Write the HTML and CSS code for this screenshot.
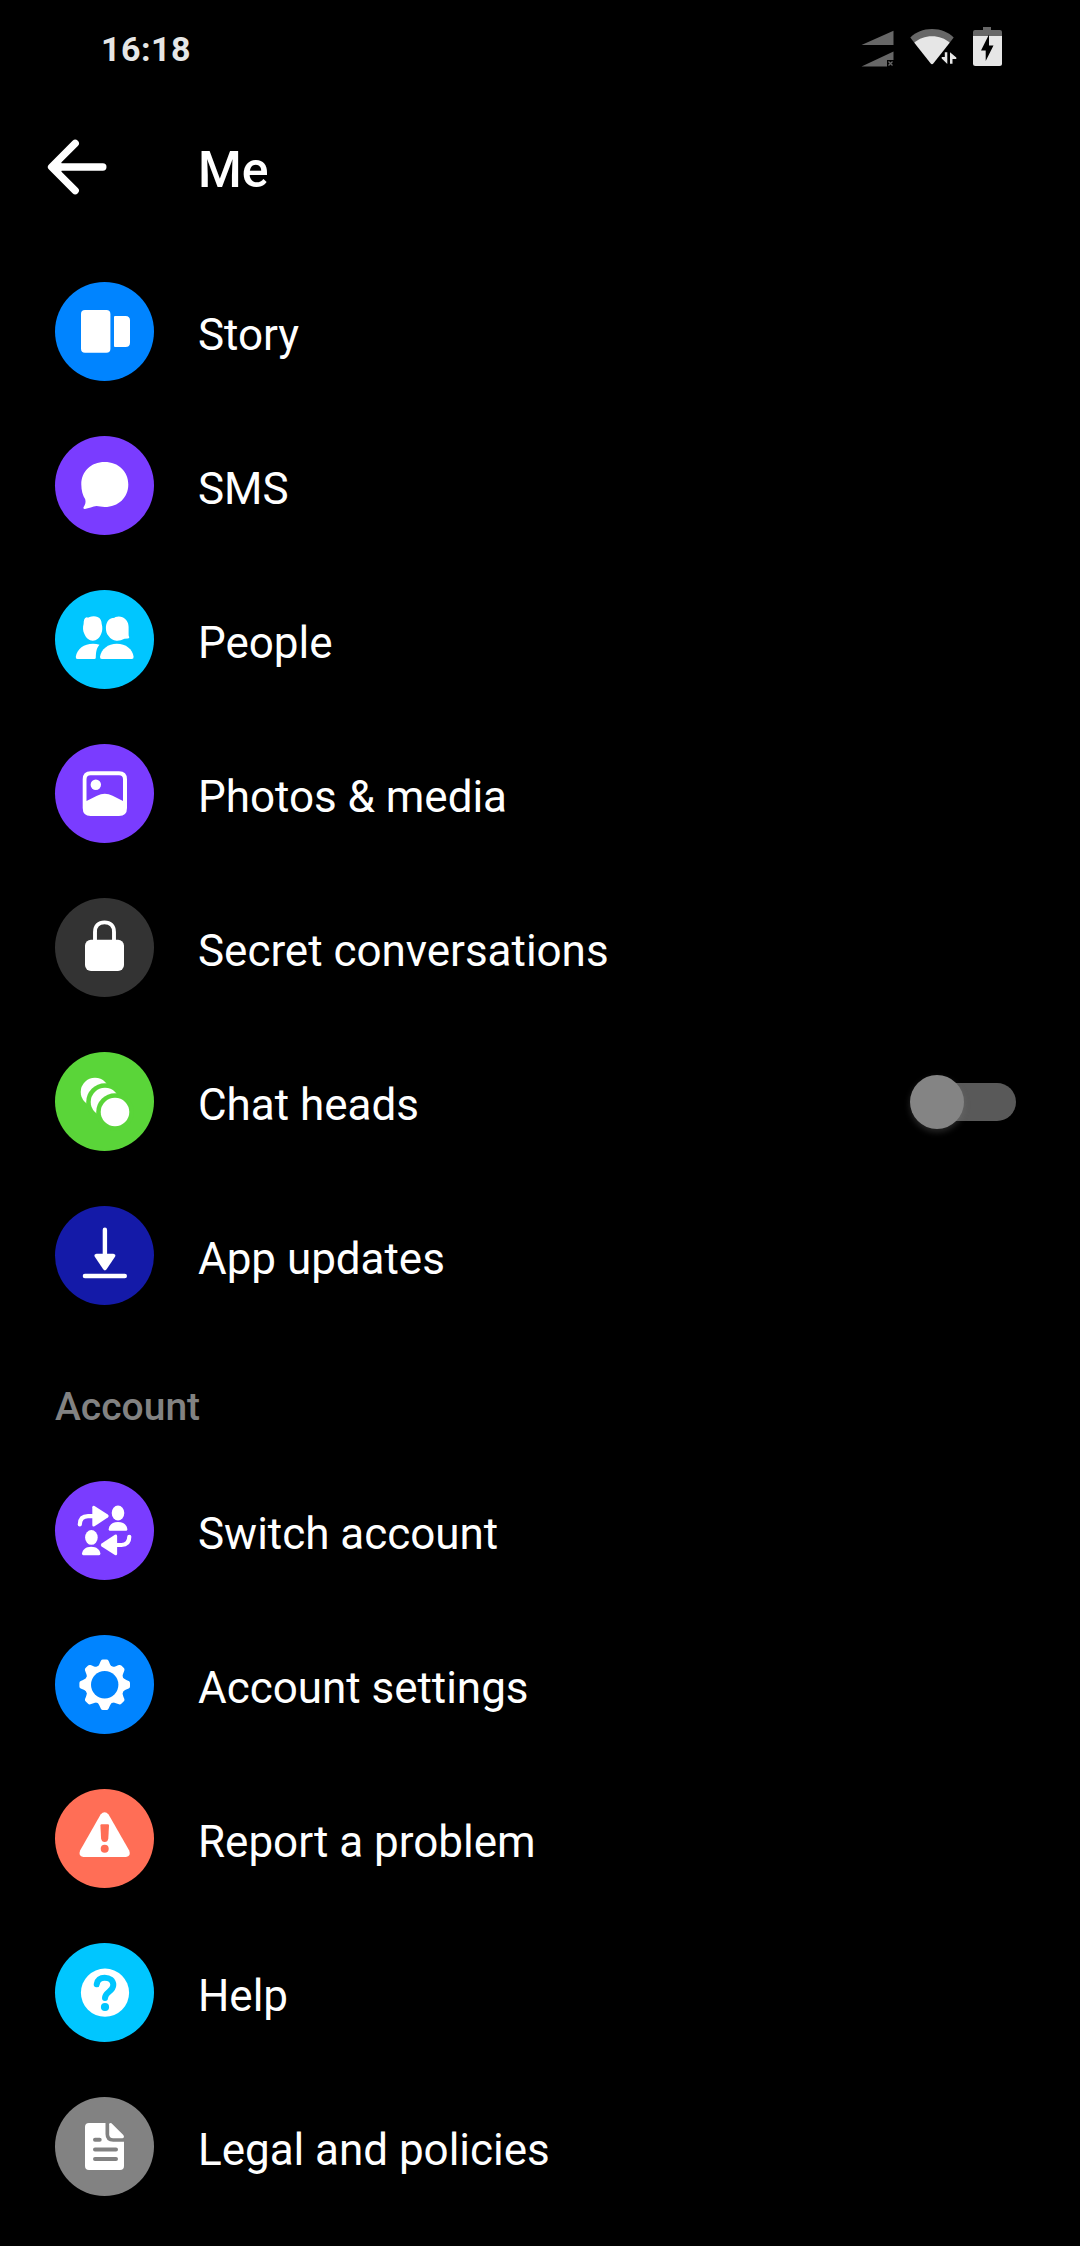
FILE: index.html
```html
<!DOCTYPE html>
<html lang="en">
<head>
    <meta charset="UTF-8">
    <meta name="viewport" content="width=device-width, initial-scale=1.0">
    <title>Me</title>
    <link rel="stylesheet" href="styles.css">
</head>
<body>

    <!-- Status bar -->
    <div class="status-bar">
        <span class="time">16:18</span>
        <div class="status-icons">
            <svg class="signal" width="33" height="38" viewBox="0 0 33 38">
                <path fill="#676767" d="M0.5 15L32.5 0.7V15ZM0.5 36.5L32.5 21.5V30H26V36.5Z"/>
                <path stroke="#676767" stroke-width="1.3" d="M27.5 31.5l4 4M31.5 31.5l-4 4"/>
            </svg>
            <svg class="wifi" width="47" height="38" viewBox="0 0 47 38">
                <path fill="#676767" d="M0.3 8.5C6 3 13 0 22 0S38 3 43.7 8.5L39.5 14H4.5Z"/>
                <path fill="#e6e6e6" d="M4.3 13.7C9 9.500 15 7.200 22 7.200S35 9.500 39.700 13.700L23.500 34.300Q22 36 20.500 34.300Z"/>
                <path fill="#e6e6e6" d="M34.800 23.300H37.300V34.900L31.700 29.600V28H34.800ZM40 34.800V23.300L46.300 28.400V30H42.500V34.800Z"/>
            </svg>
            <svg class="battery" width="29" height="40" viewBox="0 0 29 40">
                <path fill="#676767" d="M10 0H18V3H27Q29 3 29 5V10H0V5Q0 3 2 3H10Z"/>
                <path fill="#e6e6e6" d="M0 9H29V36.5Q29 39 26.5 39H2.5Q0 39 0 36.5Z"/>
                <path fill="#000" d="M16 7.5V18.5H20.5L12.7 34V23.5H8Z"/>
            </svg>
        </div>
    </div>

    <!-- Toolbar -->
    <div class="toolbar">
        <svg class="back" width="60" height="56" viewBox="0 0 60 56">
            <path d="M28.2 4.4L4.6 28L28.2 51.6M5.5 28H55.8M8 28L11 25V31Z"/>
        </svg>
        <h1 class="title">Me</h1>
    </div>

    <!-- Preferences -->
    <div class="list">
        <div class="row">
            <svg class="icon blue" viewBox="0 0 99 99">
                <rect x="26" y="28" width="29.4" height="42.7" rx="4"/>
                <path d="M60 34H70.5Q75 34 75 38.5V60.5Q75 65 70.5 65H60Q59 65 59 64V35Q59 34 60 34Z"/>
            </svg>
            <span class="label">Story</span>
        </div>
        <div class="row">
            <svg class="icon purple" viewBox="0 0 99 99">
                <path d="M49.7 26C63.5 26 73.3 35.5 73.3 48.5S63.5 71 49.7 71C46.5 71 44 70.2 41.5 70C38 70.3 33.5 72.5 30 73C28.4 73.2 28 72 28.8 70.8C30.3 68.5 31 66 30.2 63.3C27.8 59.5 26.3 54.5 26.3 48.5C26.3 35.5 35.8 26 49.7 26Z"/>
            </svg>
            <span class="label">SMS</span>
        </div>
        <div class="row">
            <svg class="icon cyan" viewBox="0 0 99 99">
                <path d="M31.5 27.3Q33.3 27.9 34.5 27C37 26.1 40.500 26.100 42.500 26.900C45.500 28 46.600 30.500 46.700 34C47.700 37 47.500 41 46.300 43.500C44.800 48 41.500 50.700 37.800 50.700S30.800 48 29.200 43.500C27.900 41 27.600 37 28.600 34C28.700 30 29.500 27.800 31.500 27.300Z"/>
                <path d="M57.500 27.900Q59.500 28.100 60.500 27C63 26.100 65.500 26.300 67.500 27.200C71.500 29 73.500 32.500 73.600 37V44Q73.500 45.800 74.200 47Q74.600 48.200 73 48.400L69.500 48.700Q65.500 50.900 61.500 50.700C58 50.400 55.500 48.500 53.800 46.200C51.600 44 50.900 41 50.900 38C51 33 53 28.800 57.500 27.900Z"/>
                <path d="M44.500 54.7C41 58.5 41 63 40.8 67.5Q40.8 69 39.3 69H22.5Q20.5 69 20.8 66.8C22 58.7 29 53.7 38 53.7Q41.5 53.7 44.5 54.7Z"/>
                <path d="M61.8 53.7C71 53.7 77.5 59 78.6 66.8Q78.8 69 76.8 69H46.8Q44.8 69 45 66.8C46.2 59 53 53.7 61.8 53.7Z"/>
            </svg>
            <span class="label">People</span>
        </div>
        <div class="row">
            <svg class="icon purple" viewBox="0 0 99 99">
                <path fill-rule="evenodd" d="M35.7 27.3H64Q72 27.3 72 35.3V64Q72 72 64 72H35.7Q27.7 72 27.7 64V35.3Q27.7 27.3 35.7 27.3ZM35.5 31.3Q31.5 31.3 31.5 35.3V57L42 51.7Q49.8 47.8 57.6 51.7L68 57V35.3Q68 31.3 64 31.3Z"/>
                <circle cx="40.8" cy="40.7" r="5.2"/>
            </svg>
            <span class="label">Photos &amp; media</span>
        </div>
        <div class="row">
            <svg class="icon dark" viewBox="0 0 99 99">
                <rect x="30" y="41.7" width="39" height="31.3" rx="6"/>
                <path class="line" stroke-width="3.9" d="M40 43V34C40 28 43.5 24.4 49.5 24.4S59 28 59 34V43"/>
            </svg>
            <span class="label">Secret conversations</span>
        </div>
        <div class="row">
            <svg class="icon green" viewBox="0 0 99 99">
                <circle cx="40" cy="40" r="14.3"/>
                <circle class="gap" cx="50" cy="50" r="18.8"/>
                <circle cx="50" cy="50" r="14.3"/>
                <circle class="gap" cx="60" cy="60" r="18.8"/>
                <circle cx="60" cy="60" r="14.3"/>
            </svg>
            <span class="label">Chat heads</span>
            <div class="switch"><div class="thumb"></div></div>
        </div>
        <div class="row">
            <svg class="icon navy" viewBox="0 0 99 99">
                <path class="line" stroke-width="4.4" d="M49.9 23.8V50M29.9 70H69.8"/>
                <path d="M41.5 47.7H58.3Q61.3 48.2 60 50.7L51.6 63.3Q49.9 65.5 48.2 63.3L39.8 50.7Q38.5 48.2 41.5 47.7Z"/>
            </svg>
            <span class="label">App updates</span>
        </div>
    </div>

    <!-- Account -->
    <h2 class="section-title">Account</h2>
    <div class="list">
        <div class="row">
            <svg class="icon purple" viewBox="0 0 99 99">
                <path class="line" stroke-width="4.2" d="M24.8 43.5C25 37.5 28.5 35.2 33 35.2H39M74.3 55.8C74.2 61.5 71 64 66.5 64H60"/>
                <path d="M37.3 26.2Q37.5 24.2 39.5 25L52.8 33.5Q54.5 35 52.8 36.6L39.5 45.3Q37.5 46.2 37.3 44.2Z"/>
                <path d="M62.1 55Q61.9 53 59.9 53.8L46.6 62.5Q44.8 64 46.6 65.6L59.9 74Q61.9 75 62.1 73Z"/>
                <ellipse cx="63" cy="32" rx="6.3" ry="7.4"/>
                <ellipse cx="36.4" cy="56.4" rx="6.3" ry="7.4"/>
                <path d="M63 41C68.5 41 71.8 44 72.3 48Q72.4 49.8 71 49.8H55Q53.6 49.8 53.7 48C54.2 44 57.5 41 63 41Z"/>
                <path d="M36.2 65.7C41.5 65.7 44.9 68.5 45.4 72.6Q45.5 74.3 44 74.3H28.3Q26.9 74.3 27 72.6C27.5 68.5 30.8 65.7 36.2 65.7Z"/>
            </svg>
            <span class="label">Switch account</span>
        </div>
        <div class="row">
            <svg class="icon blue" viewBox="0 0 99 99">
                <defs>
                    <path id="tooth" d="M-8 -17.5C-5.5 -19 -5 -21.5 -3.8 -24Q-3.2 -25.3 -1.8 -25.3H1.8Q3.2 -25.3 3.8 -24C5 -21.5 5.5 -19 8 -17.5Z"/>
                </defs>
                <g transform="translate(49.7 49.7)">
                    <circle r="19.6"/>
                    <use href="#tooth"/>
                    <use href="#tooth" transform="rotate(45)"/>
                    <use href="#tooth" transform="rotate(90)"/>
                    <use href="#tooth" transform="rotate(135)"/>
                    <use href="#tooth" transform="rotate(180)"/>
                    <use href="#tooth" transform="rotate(225)"/>
                    <use href="#tooth" transform="rotate(270)"/>
                    <use href="#tooth" transform="rotate(315)"/>
                    <circle class="gap" r="13.7"/>
                </g>
            </svg>
            <span class="label">Account settings</span>
        </div>
        <div class="row">
            <svg class="icon coral" viewBox="0 0 99 99">
                <path d="M45.6 25.5Q49.6 20.8 53.6 25.5L74.2 61.5Q76.3 67.2 71 68H28.3Q23 67.2 25.1 61.5Z"/>
                <path class="gap" d="M46.5 35.3H52.9Q54 35.3 54 36.5L53.3 49.5Q52.7 53 49.7 53T46.1 49.5L45.4 36.5Q45.4 35.3 46.5 35.3Z"/>
                <circle class="gap" cx="49.7" cy="59.7" r="4"/>
            </svg>
            <span class="label">Report a problem</span>
        </div>
        <div class="row">
            <svg class="icon cyan" viewBox="0 0 99 99">
                <circle cx="50" cy="49.7" r="24.1"/>
                <path class="mark" d="M41.7 41.3C42.2 37 45.3 34.7 49.7 34.7C54.5 34.7 58.3 37.5 58.3 42C58.3 48.5 50 49 50 55"/>
                <circle class="gap" cx="50" cy="64" r="4.1"/>
            </svg>
            <span class="label">Help</span>
        </div>
        <div class="row">
            <svg class="icon gray" viewBox="0 0 99 99">
                <path d="M34 26H50.5V37Q50.5 44.7 58.2 44.7H69V69Q69 73 65 73H34Q30 73 30 69V30Q30 26 34 26Z"/>
                <path d="M54.2 27.3Q54.3 25.3 56.5 26.3L68.3 38Q70 40.5 67.5 41.2H58.2Q54.2 41.2 54.2 37.2Z"/>
                <path class="rule" d="M40 42.7H44.7M40 52.4H61M40 62H61"/>
            </svg>
            <span class="label">Legal and policies</span>
        </div>
    </div>

</body>
</html>
```
FILE: styles.css
```css
body {
    margin: 0;
    background: #000;
    color: #fff;
    font-family: Roboto, sans-serif;
}

.status-bar {
    display: flex;
    justify-content: space-between;
    height: 73px;
    padding: 27px 78px 0 101px;
}

.time {
    color: #e6e6e6;
    font-size: 34px;
    font-weight: 700;
    letter-spacing: 0.5px;
    line-height: 44px;
}

.status-icons {
    display: flex;
    align-items: flex-start;
}

.signal {
    margin-top: 3px;
}

.wifi {
    margin: 2px 16px 0;
}

.toolbar {
    display: flex;
    height: 116px;
    padding: 39px 46px 0 47px;
}

.back {
    fill: none;
    stroke: #fff;
    stroke-width: 7.4;
    stroke-linecap: round;
    stroke-linejoin: round;
}

.title {
    margin: 2px 0 0 91px;
    font-size: 50px;
    font-weight: 500;
    line-height: 58px;
}

.row {
    display: flex;
    align-items: center;
    height: 99px;
    padding: 27px 64px 28px 55px;
}

.icon {
    width: 99px;
    height: 99px;
    border-radius: 50%;
    background: var(--tint);
    fill: #fff;
}

.icon .line {
    fill: none;
    stroke: #fff;
    stroke-linecap: round;
}

.icon .gap {
    fill: var(--tint);
}

.icon .mark {
    fill: none;
    stroke: var(--tint);
    stroke-width: 6;
    stroke-linecap: round;
}

.icon .rule {
    fill: none;
    stroke: var(--tint);
    stroke-width: 4;
    stroke-linecap: round;
}

.blue { --tint: #0084ff; }
.purple { --tint: #7a3cff; }
.cyan { --tint: #00c6ff; }
.dark { --tint: #333333; }
.green { --tint: #5ad539; }
.navy { --tint: #141aa8; }
.coral { --tint: #ff6e56; }
.gray { --tint: #828282; }

.label {
    flex: 1;
    margin-left: 44px;
    padding-top: 6px;
    font-size: 44px;
    letter-spacing: -0.03px;
    line-height: 52px;
}

.switch {
    width: 96px;
    height: 38px;
    border-radius: 19px;
    background: #595959;
    display: flex;
    align-items: center;
    margin-top: 1px;
}

.thumb {
    width: 54px;
    height: 54px;
    margin-left: -10px;
    border-radius: 50%;
    background: #848484;
    box-shadow: 0 3px 6px rgba(132, 132, 132, 0.3);
}

.section-title {
    height: 85px;
    margin: 0;
    padding: 36px 0 0 55px;
    color: #828282;
    font-size: 39px;
    font-weight: 500;
    line-height: 76px;
}
```
